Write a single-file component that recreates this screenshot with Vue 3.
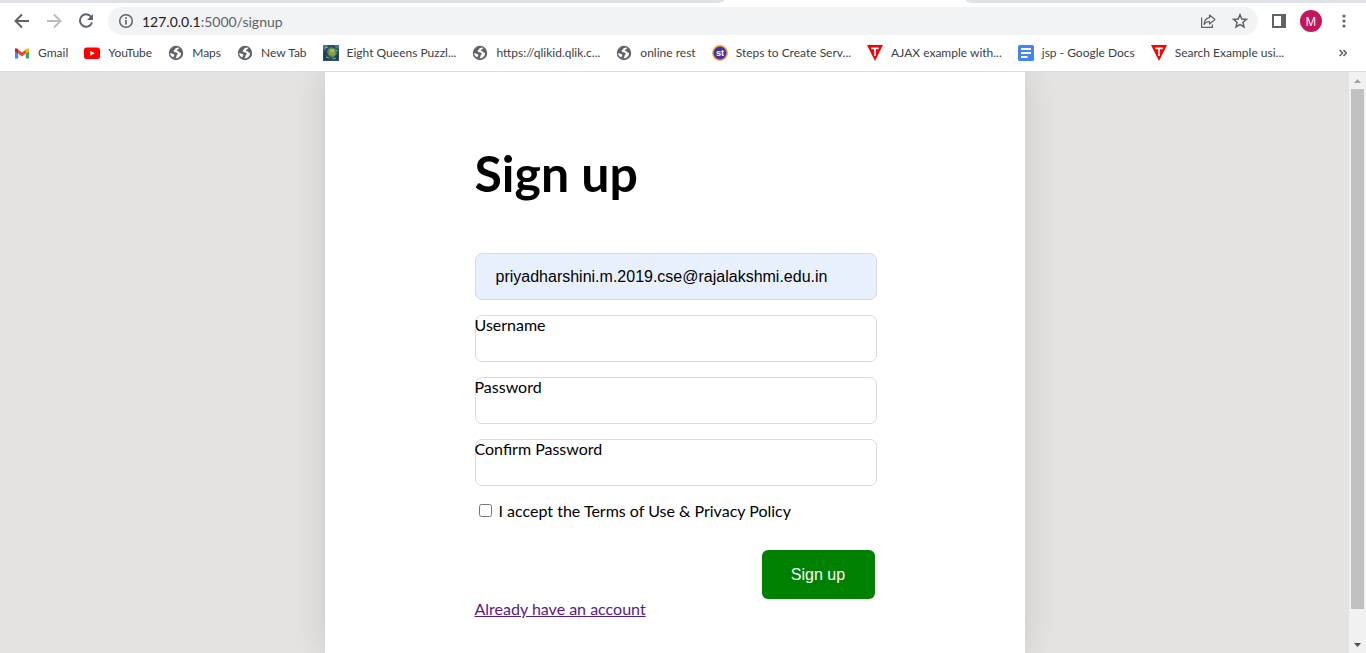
<script setup>
import { ref } from 'vue'

const bookmarks = [
  { label: 'Gmail', icon: 'gmail' },
  { label: 'YouTube', icon: 'youtube' },
  { label: 'Maps', icon: 'globe' },
  { label: 'New Tab', icon: 'globe' },
  { label: 'Eight Queens Puzzl...', icon: 'queens' },
  { label: 'https://qlikid.qlik.c...', icon: 'globe' },
  { label: 'online rest', icon: 'globe' },
  { label: 'Steps to Create Serv...', icon: 'st' },
  { label: 'AJAX example with...', icon: 'tri' },
  { label: 'jsp - Google Docs', icon: 'docs' },
  { label: 'Search Example usi...', icon: 'tri' },
]

const email = ref('priyadharshini.m.2019.cse@rajalakshmi.edu.in')
const username = ref('')
const password = ref('')
const confirm = ref('')
const accepted = ref(false)
</script>

<template>
  <div class="window">
    <header class="chrome">
      <div class="tabstrip"><span class="strip left"></span><span class="strip right"></span></div>
      <div class="toolbar">
        <button class="tool" type="button" aria-label="Back">
          <svg width="16" height="16" viewBox="0 0 16 16"><path d="M15 8H2M8 1.5L1.5 8L8 14.5" fill="none" stroke="#5f6368" stroke-width="2" /></svg>
        </button>
        <button class="tool" type="button" aria-label="Forward" disabled>
          <svg width="16" height="16" viewBox="0 0 16 16"><path d="M1 8H14M8 1.5L14.500 8L8 14.500" fill="none" stroke="#babcbe" stroke-width="2" /></svg>
        </button>
        <button class="tool" type="button" aria-label="Reload">
          <svg width="16" height="16" viewBox="0 0 16 16"><path d="M13.200 4A6.200 6.200 0 1 0 14 9.500" fill="none" stroke="#5f6368" stroke-width="2" /><path d="M15 1V7H9Z" fill="#5f6368" /></svg>
        </button>
        <div class="omnibox">
          <svg width="16" height="16" viewBox="0 0 16 16"><circle cx="8" cy="8" r="6.300" fill="none" stroke="#5f6368" stroke-width="1.500" /><path d="M8 7V11.500M8 4.300V6" stroke="#5f6368" stroke-width="1.700" /></svg>
          <span class="url"><b>127.0.0.1</b>:5000/signup</span>
          <button class="tool" type="button" aria-label="Share">
            <svg width="16" height="16" viewBox="0 0 16 16" fill="none" stroke="#5f6368" stroke-width="1.200"><path d="M1.600 4.500V14.400H12.400V11.500" /><path d="M9.500 2L15 6.500L9.500 11V8.500C7 8.500 5.300 9.300 4 11.500C4.300 7.500 6.500 5.200 9.500 4.700Z" stroke-linejoin="round" /></svg>
          </button>
          <button class="tool" type="button" aria-label="Bookmark this page">
            <svg width="16" height="16" viewBox="0 0 16 16"><path d="M8 1.800L9.800 6L14.400 6.400L10.900 9.400L12 13.900L8 11.500L4 13.900L5.100 9.400L1.600 6.400L6.200 6Z" fill="none" stroke="#5f6368" stroke-width="1.500" /></svg>
          </button>
        </div>
        <button class="tool side" type="button" aria-label="Side panel">
          <svg width="14" height="14" viewBox="0 0 14 14"><path d="M1 1H13V13H1Z" fill="none" stroke="#5f6368" stroke-width="2" /><path d="M9 1H13V13H9Z" fill="#5f6368" /></svg>
        </button>
        <button class="avatar" type="button">M</button>
        <button class="tool" type="button" aria-label="Menu">
          <svg width="16" height="16" viewBox="0 0 16 16" fill="#5f6368"><circle cx="8" cy="3" r="1.600" /><circle cx="8" cy="8" r="1.600" /><circle cx="8" cy="13" r="1.600" /></svg>
        </button>
      </div>
      <nav class="bookmarks" aria-label="Bookmarks">
        <a v-for="b in bookmarks" :key="b.label" class="bookmark" href="#">
          <svg width="16" height="16" viewBox="0 0 16 16" aria-hidden="true">
            <template v-if="b.icon === 'gmail'">
              <path d="M1 3.500V13.500H4.200V6.500Z" fill="#4285f4" />
              <path d="M15 3.500V13.500H11.800V6.500Z" fill="#34a853" />
              <path d="M11.800 4.500L13 3.500Q15 2.700 15 4.500V6.200L11.800 8.600Z" fill="#fbbc04" />
              <path d="M1 6.200V4.500Q1 2.700 3 3.500L4.200 4.500V8.600Z" fill="#c5221f" />
              <path d="M4.200 4.500L8 7.400L11.800 4.500V8.600L8 11.500L4.200 8.600Z" fill="#ea4335" />
            </template>
            <template v-else-if="b.icon === 'youtube'">
              <rect x="0" y="2.500" width="16" height="11.500" rx="2.500" fill="#f00" />
              <path d="M6.300 5.700L10.700 8.200L6.300 10.700Z" fill="#fff" />
            </template>
            <template v-else-if="b.icon === 'globe'">
              <circle cx="8" cy="8" r="7.200" fill="#5f6368" />
              <path d="M10.300 2.600C8.500 2.700 6.800 3.500 6.700 4.700C5.600 4.900 5.400 6.500 6.300 7.100C7.600 7.700 9.300 7.200 9.700 8.400C9.900 9.500 8.500 9.700 8.500 10.800C8.500 12 8 12.900 7.200 13.300C9.500 13.500 11.500 12.300 12.500 10.400C12.900 9.500 13.100 8.500 13 7.700C12.300 7.900 11.600 7.600 11.200 6.900C10.700 6.100 9.400 6.500 9 5.600C8.700 4.700 10.500 4.300 11.200 3.200Z" fill="#fff" />
              <path d="M2.200 7.900C3.200 8.500 5.700 8.500 6.300 9.700C6.600 10.700 5.500 11 5.300 12.300C3.500 11.500 2.200 9.900 2.200 7.900Z" fill="#fff" />
            </template>
            <template v-else-if="b.icon === 'queens'">
              <rect width="16" height="16" fill="#285066" />
              <path d="M0 0H5L2 5L0 4ZM11 0H16V4L13 3Z" fill="#437d93" />
              <path d="M1 8L4 5L3 11L6 15H1ZM12 11L15 7V14L11 15Z" fill="#1d3c55" />
              <path d="M5 4L8 2L13 4L14 9L10 13L6 11L4 7Z" fill="#62854c" />
              <path d="M6 5H12V10L9 11L6 9Z" fill="#8d9f45" />
              <path d="M7 4H11V7H8Z" fill="#adb85b" />
              <path d="M2 3L5 2M3 12L6 13M13 5L15 6M10 14L13 13" stroke="#70b1aa" />
            </template>
            <template v-else-if="b.icon === 'st'">
              <circle cx="8" cy="8" r="7.200" fill="#4232a3" stroke="#f3a635" stroke-width="1.400" />
              <text x="8" y="11" text-anchor="middle" class="st">st</text>
            </template>
            <template v-else-if="b.icon === 'tri'">
              <path d="M0 0H16L8 16Z" fill="#f00" />
              <path d="M4.300 3.300H11.700M8 3.300V11" stroke="#fff" stroke-width="1.700" />
            </template>
            <template v-else>
              <rect width="16" height="16" rx="1.500" fill="#4285f4" />
              <path d="M3 4H13M3 8H13M3 12H9.500" stroke="#fff" stroke-width="1.800" />
            </template>
          </svg>
          <span>{{ b.label }}</span>
        </a>
        <button class="more" type="button" aria-label="More bookmarks">
          <svg width="8" height="8" viewBox="0 0 8 8"><path d="M0.700 1L3.500 4L0.700 7M4.500 1L7.300 4L4.500 7" fill="none" stroke="#5f6368" stroke-width="1.600" /></svg>
        </button>
      </nav>
    </header>

    <div class="viewport">
      <main class="page">
        <form class="card" @submit.prevent>
          <h1>Sign up</h1>
          <input v-model="email" class="field filled" type="email" aria-label="Email" />
          <div class="group">
            <label for="username">Username</label>
            <input id="username" v-model="username" class="field" type="text" />
          </div>
          <div class="group">
            <label for="password">Password</label>
            <input id="password" v-model="password" class="field" type="password" />
          </div>
          <div class="group">
            <label for="confirm">Confirm Password</label>
            <input id="confirm" v-model="confirm" class="field" type="password" />
          </div>
          <label class="terms"><input v-model="accepted" type="checkbox" /><span>I accept the Terms of Use &amp; Privacy Policy</span></label>
          <button class="submit" type="submit">Sign up</button>
          <a class="login" href="#">Already have an account</a>
        </form>
      </main>
      <div class="scrollbar" aria-hidden="true">
        <svg width="17" height="17" viewBox="0 0 17 17"><path d="M5 11L8.500 7L12 11Z" fill="#a3a3a3" /></svg>
        <div class="track"><div class="thumb"></div></div>
        <svg width="17" height="17" viewBox="0 0 17 17"><path d="M5 7L8.500 11L12 7Z" fill="#505050" /></svg>
      </div>
    </div>
  </div>
</template>

<style>
body {
  margin: 0;
}
</style>

<style scoped>
* {
  box-sizing: border-box;
}
.window {
  display: flex;
  flex-direction: column;
  height: 100vh;
  overflow: hidden;
  font-family: Lato, "Liberation Sans", sans-serif;
  font-size: 16px;
  color: #000;
}
button {
  padding: 0;
  border: 0;
  background: none;
  font-family: inherit;
}
svg {
  display: block;
  flex: none;
}
.chrome {
  flex: none;
  background: #fff;
  border-bottom: 1px solid #dadada;
}
.tabstrip {
  display: flex;
  justify-content: space-between;
  height: 3px;
}
.strip {
  background: #dee1e6;
}
.left {
  width: 53%;
  border-bottom-right-radius: 6px 3px;
}
.right {
  width: 29.300%;
  border-bottom-left-radius: 6px 3px;
}
.toolbar {
  display: flex;
  align-items: center;
  gap: 16px;
  height: 36px;
  padding: 0 14px;
}
.omnibox {
  flex: 1;
  display: flex;
  align-items: center;
  gap: 16px;
  height: 28px;
  margin-left: -2px;
  padding: 0 10px;
  border-radius: 14px;
  background: #f1f3f4;
}
.url {
  flex: 1;
  margin-left: -8px;
  font-size: 14px;
  color: #5f6368;
}
.url b {
  font-weight: 400;
  color: #202124;
}
.side {
  margin-left: -2px;
}
.avatar {
  width: 22px;
  height: 22px;
  margin: 0 -2px;
  border-radius: 50%;
  background: #c2185b;
  color: #fff;
  font: 12px "Open Sans", sans-serif;
}
.bookmarks {
  display: flex;
  align-items: center;
  gap: 16px;
  height: 32px;
  padding: 0 19px 4px 14px;
}
.bookmark {
  display: flex;
  align-items: center;
  gap: 8px;
  font-size: 12px;
  line-height: 16px;
  color: #3c4043;
  text-decoration: none;
  white-space: nowrap;
}
.st {
  font: bold 9px "Liberation Sans", sans-serif;
  fill: #fff;
}
.more {
  margin-left: auto;
}
.viewport {
  flex: 1;
  display: flex;
  min-height: 0;
}
.page {
  flex: 1;
  display: flex;
  justify-content: center;
  overflow: hidden;
  background: #e4e3e1;
}
.card {
  display: flex;
  flex-direction: column;
  width: 700px;
  padding: 70px 148px 120px 150px;
  background: #fff;
  box-shadow: 0 0 32px rgba(0, 0, 0, 0.120);
}
h1 {
  margin: 0 0 49px;
  font-size: 50px;
  line-height: 62px;
  font-weight: 700;
}
.field {
  display: block;
  width: 100%;
  height: 47px;
  padding: 0 20px;
  border: 1px solid #dadada;
  border-radius: 7px;
  background: #fff;
  font: 16px "Liberation Sans", Arial, sans-serif;
  color: #000;
}
.filled {
  flex: none;
  background: #e8f0fe;
}
.group {
  display: grid;
  margin-top: 15px;
}
.group > * {
  grid-area: 1 / 1;
}
.group label {
  z-index: 1;
  justify-self: start;
  align-self: start;
  line-height: 20px;
}
.terms {
  display: flex;
  align-items: center;
  gap: 7px;
  margin-top: 15px;
  padding-left: 4px;
  line-height: 20px;
}
.terms input {
  width: 13px;
  height: 13px;
  margin: 0 0 2px;
}
.submit {
  flex: none;
  align-self: flex-end;
  width: 113px;
  height: 49px;
  margin: 29px 2px 0 0;
  border-radius: 6px;
  background: green;
  color: #fff;
  font: 16px "Liberation Sans", Arial, sans-serif;
}
.login {
  align-self: flex-start;
  line-height: 20px;
  color: #551a8b;
}
.scrollbar {
  flex: none;
  display: flex;
  flex-direction: column;
  width: 17px;
  background: #f1f1f1;
}
.track {
  flex: 1;
  padding: 0 2px;
}
.thumb {
  height: 95%;
  background: #c1c1c1;
}
</style>
